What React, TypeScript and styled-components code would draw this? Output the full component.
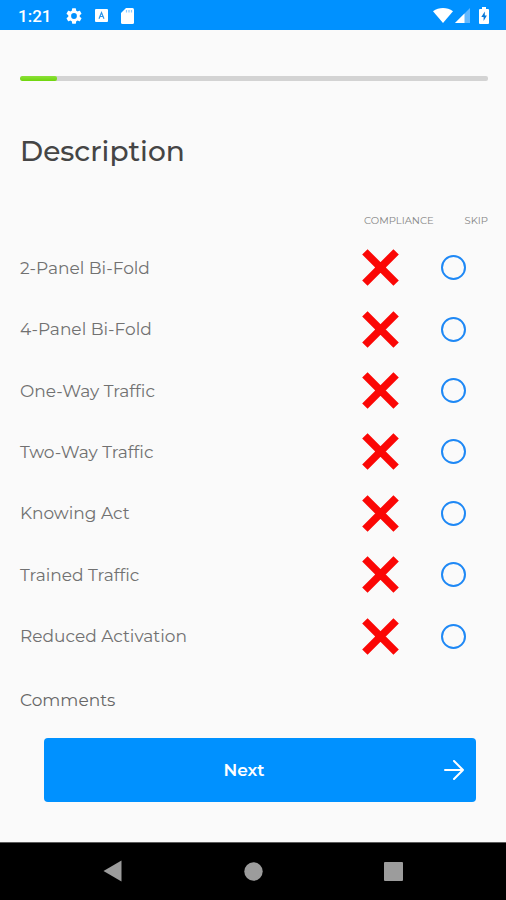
import React, { useState } from "react";
import styled, { createGlobalStyle } from "styled-components";

const GlobalStyle = createGlobalStyle`
  *, *::before, *::after { box-sizing: border-box; }
  body {
    margin: 0;
    background: #fafafa;
    font-family: Montserrat, Inter, sans-serif;
  }
`;

const Screen = styled.div`
  display: flex;
  flex-direction: column;
  min-height: 100vh;
  background: #fafafa;
`;

const StatusBar = styled.header`
  display: flex;
  align-items: center;
  justify-content: space-between;
  height: 30px;
  padding: 1px 17px 0 18px;
  background: #0091ff;
  color: #fff;
`;

const StatusGroup = styled.div<{ $gap: number }>`
  display: flex;
  align-items: center;
  gap: ${(p) => p.$gap}px;
`;

const Clock = styled.time`
  margin-right: 2px;
  font: 500 17px/28px Roboto, sans-serif;
`;

const Content = styled.main`
  display: flex;
  flex: 1;
  flex-direction: column;
  padding: 46px 18px 40px 20px;
`;

const Progress = styled.div`
  height: 5px;
  border-radius: 2px;
  background: #d3d3d3;
  overflow: hidden;
`;

const ProgressFill = styled.div`
  height: 100%;
  border-radius: 2px;
  background: linear-gradient(#8be03a, #6fd60c);
`;

const Title = styled.h1`
  margin: 52px 0 35px;
  color: #454545;
  font-size: 28px;
  font-weight: 500;
  line-height: 36px;
`;

const Checklist = styled.table`
  width: 100%;
  height: 463px;
  border-collapse: collapse;
  table-layout: fixed;
`;

const HeadCell = styled.th<{ $width?: number; $align?: "left" | "right" }>`
  width: ${(p) => (p.$width ? `${p.$width}px` : "auto")};
  height: 33px;
  padding: 0 0 0 2px;
  color: #858585;
  font-size: 10px;
  font-weight: 400;
  line-height: 12px;
  text-align: ${(p) => p.$align ?? "left"};
  vertical-align: middle;
`;

const LabelCell = styled.th`
  height: 61px;
  padding: 0;
  color: #717171;
  font-size: 17px;
  font-weight: 400;
  line-height: 24px;
  text-align: left;
`;

const Cell = styled.td`
  padding: 0;
  vertical-align: middle;
`;

const MarkButton = styled.button`
  display: block;
  padding: 0;
  border: 0;
  background: none;
  cursor: pointer;

  svg { display: block; }
`;

const SkipRadio = styled.input`
  display: block;
  width: 25px;
  height: 25px;
  margin: 0;
  border: 2px solid #1e88f5;
  border-radius: 50%;
  appearance: none;
  cursor: pointer;

  &:checked {
    background: radial-gradient(#1e88f5 50%, transparent 55%);
  }
`;

const Comments = styled.h2`
  margin: 21px 0 26px;
  color: #666;
  font-size: 17px;
  font-weight: 400;
  line-height: 24px;
`;

const NextButton = styled.button`
  display: grid;
  grid-template-columns: 1fr auto;
  align-items: center;
  height: 64px;
  margin: 0 12px 0 24px;
  padding: 0 12px 0 0;
  border: 0;
  border-radius: 4px;
  background: #0091ff;
  color: #fff;
  font: 600 17px/24px Montserrat, Inter, sans-serif;
  cursor: pointer;
`;

const NavBar = styled.nav`
  display: grid;
  grid-template-columns: repeat(3, 140px);
  justify-content: center;
  height: 59px;
  padding-bottom: 2px;
  border-top: 1px solid #5c5c5c;
  background: #000;
`;

const NavButton = styled.button`
  display: flex;
  align-items: center;
  justify-content: center;
  padding: 0;
  border: 0;
  background: none;
  color: #9c9c9c;
  cursor: pointer;
`;

const items = [
  "2-Panel Bi-Fold",
  "4-Panel Bi-Fold",
  "One-Way Traffic",
  "Two-Way Traffic",
  "Knowing Act",
  "Trained Traffic",
  "Reduced Activation",
];

const GearIcon = () => (
  <svg width="16" height="16" viewBox="2 2 20 20" fill="currentColor" aria-hidden="true">
    <path d="M19.14 12.94c.04-.3.06-.61.06-.94s-.02-.64-.07-.94l2.03-1.58a.49.49 0 0 0 .12-.61l-1.92-3.32a.49.49 0 0 0-.59-.22l-2.39.96a7 7 0 0 0-1.62-.94l-.36-2.54a.48.48 0 0 0-.48-.41h-3.84a.47.47 0 0 0-.47.41l-.36 2.54c-.59.24-1.13.57-1.62.94l-2.39-.96a.48.48 0 0 0-.59.22L2.74 8.87a.48.48 0 0 0 .12.61l2.03 1.58a6 6 0 0 0 0 1.88l-2.03 1.58a.49.49 0 0 0-.12.61l1.92 3.32c.12.22.37.29.59.22l2.39-.96c.5.38 1.03.7 1.62.94l.36 2.54c.05.24.24.41.48.41h3.84c.24 0 .44-.17.47-.41l.36-2.54a7 7 0 0 0 1.62-.94l2.39.96c.22.08.47 0 .59-.22l1.92-3.32a.48.48 0 0 0-.12-.61zM12 15.600a3.600 3.600 0 1 1 0-7.200 3.600 3.600 0 0 1 0 7.200z" />
  </svg>
);

const KeyboardIcon = () => (
  <svg width="13" height="13" viewBox="0 0 13 13" aria-hidden="true">
    <rect width="13" height="13" rx="1" fill="currentColor" />
    <path d="M4 9.800 6.500 3.600 9 9.800M5 7.500h3" fill="none" stroke="#2a94ea" strokeWidth="1.2" />
  </svg>
);

const CardIcon = () => (
  <svg width="13" height="16" viewBox="0 0 13 16" aria-hidden="true">
    <path d="M5 0h6.500A1.500 1.500 0 0 1 13 1.500v13a1.500 1.500 0 0 1-1.500 1.500h-10A1.500 1.500 0 0 1 0 14.500V5z" fill="currentColor" />
    <path d="M5.500 2v2.500M8 2v2.500M10.500 2v2.500" stroke="#8ccaff" strokeWidth="1.2" />
  </svg>
);

const WifiIcon = () => (
  <svg width="20" height="15" viewBox="0 0 20 15" aria-hidden="true">
    <path d="M0 3.200C6-1 14-1 20 3.200L10 15z" fill="currentColor" />
  </svg>
);

const SignalIcon = () => (
  <svg width="15" height="15" viewBox="0 0 15 15" aria-hidden="true">
    <path d="M15 0v15H0z" fill="#62b8ff" />
    <path d="M9.500 5.500V15H0z" fill="currentColor" />
  </svg>
);

const BatteryIcon = () => (
  <svg width="10" height="17" viewBox="0 0 10 17" aria-hidden="true">
    <path d="M3 0h4v2h2a1 1 0 0 1 1 1v13a1 1 0 0 1-1 1H1a1 1 0 0 1-1-1V3a1 1 0 0 1 1-1h2z" fill="currentColor" />
    <path d="M5.800 4.500 2.300 10h2.300v4l3.300-5.500H5.800z" fill="#0878d8" />
  </svg>
);

const CrossIcon = () => (
  <svg width="37" height="37" viewBox="0 0 36 36" aria-hidden="true">
    <path d="M2.800 2.800l30.400 30.400M33.200 2.800l-30.400 30.400" stroke="#fb0705" strokeWidth="7.400" />
  </svg>
);

const CheckIcon = () => (
  <svg width="37" height="37" viewBox="0 0 36 36" aria-hidden="true">
    <path d="M3 19l10 10L33 7" fill="none" stroke="#6fd60c" strokeWidth="6" />
  </svg>
);

const ArrowIcon = () => (
  <svg width="20" height="20" viewBox="0 0 20 20" fill="none" stroke="currentColor" strokeWidth="2" strokeLinecap="round" strokeLinejoin="round" aria-hidden="true">
    <path d="M1 10h18M10 1l9 9-9 9" />
  </svg>
);

function ChecklistRow({ label }: { label: string }) {
  const [compliant, setCompliant] = useState(false);
  return (
    <tr>
      <LabelCell scope="row">{label}</LabelCell>
      <Cell>
        <MarkButton
          type="button"
          aria-label={`${label} compliance`}
          aria-pressed={compliant}
          onClick={() => setCompliant(!compliant)}
        >
          {compliant ? <CheckIcon /> : <CrossIcon />}
        </MarkButton>
      </Cell>
      <Cell>
        <SkipRadio type="radio" name={`skip-${label}`} aria-label={`Skip ${label}`} />
      </Cell>
    </tr>
  );
}

export default function App() {
  const progress = 8;
  return (
    <Screen>
      <GlobalStyle />
      <StatusBar>
        <StatusGroup $gap={13}>
          <Clock>1:21</Clock>
          <GearIcon />
          <KeyboardIcon />
          <CardIcon />
        </StatusGroup>
        <StatusGroup $gap={9}>
          <StatusGroup $gap={2}>
            <WifiIcon />
            <SignalIcon />
          </StatusGroup>
          <BatteryIcon />
        </StatusGroup>
      </StatusBar>
      <Content>
        <Progress role="progressbar" aria-label="Form progress" aria-valuenow={progress} aria-valuemin={0} aria-valuemax={100}>
          <ProgressFill style={{ width: `${progress}%` }} />
        </Progress>
        <Title>Description</Title>
        <Checklist>
          <thead>
            <tr>
              <HeadCell as="td" />
              <HeadCell scope="col" $width={79}>COMPLIANCE</HeadCell>
              <HeadCell scope="col" $width={47} $align="right">SKIP</HeadCell>
            </tr>
          </thead>
          <tbody>
            {items.map((label) => (
              <ChecklistRow key={label} label={label} />
            ))}
          </tbody>
        </Checklist>
        <Comments>Comments</Comments>
        <NextButton type="button">
          <span>Next</span>
          <ArrowIcon />
        </NextButton>
      </Content>
      <NavBar aria-label="System">
        <NavButton type="button" aria-label="Back">
          <svg width="20" height="22" viewBox="0 0 20 22" fill="currentColor" aria-hidden="true">
            <path d="M18.500 .5v21L.5 11z" />
          </svg>
        </NavButton>
        <NavButton type="button" aria-label="Home">
          <svg width="19" height="19" viewBox="0 0 19 19" fill="currentColor" aria-hidden="true">
            <circle cx="9.500" cy="9.500" r="9.200" />
          </svg>
        </NavButton>
        <NavButton type="button" aria-label="Recent apps">
          <svg width="19" height="19" viewBox="0 0 19 19" fill="currentColor" aria-hidden="true">
            <rect width="19" height="19" rx="1" />
          </svg>
        </NavButton>
      </NavBar>
    </Screen>
  );
}
